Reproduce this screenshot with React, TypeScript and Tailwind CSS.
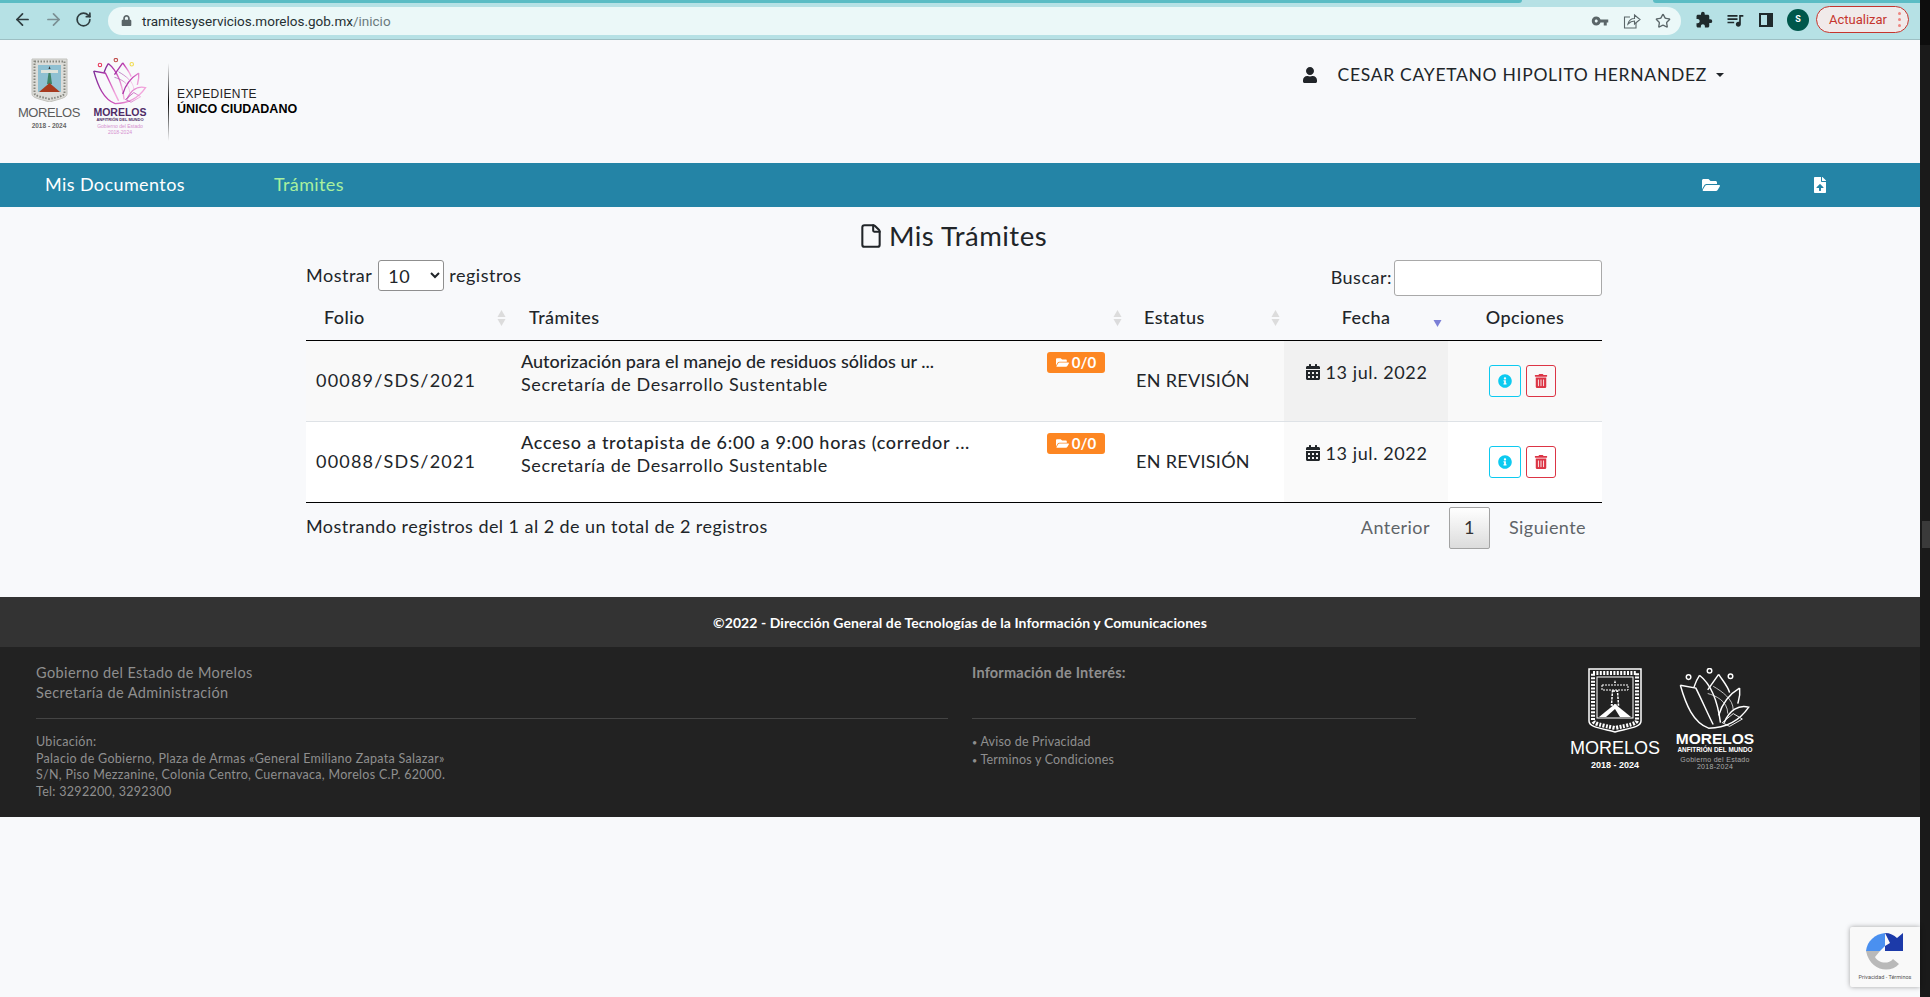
import { ArrowLeft, ArrowRight, File, RotateCw, Star } from 'lucide-react';
import { FaCalendarAlt, FaFileUpload, FaFolderOpen, FaInfoCircle, FaLock, FaTrashAlt, FaUser } from 'react-icons/fa';
import { MdExtension, MdQueueMusic, MdVpnKey } from 'react-icons/md';

const PAGE_FONT = "font-['Lato','Noto_Sans',sans-serif]";

const ROWS = [
    { folio: '00089/SDS/2021', title: 'Autorización para el manejo de residuos sólidos ur ...', titleClass: 'tracking-[0px]', striped: true },
    { folio: '00088/SDS/2021', title: 'Acceso a trotapista de 6:00 a 9:00 horas (corredor ...', titleClass: 'tracking-[0.7px]', striped: false },
];

function SortArrows({ active = false }: { active?: boolean }) {
    if (active) {
        return (
            <svg width="9" height="14" viewBox="0 0 9 14" className="absolute right-[6px] top-[18px]">
                <path d="M0.5 6 H8.5 L4.5 13 Z" fill="#7b7fd6" />
            </svg>
        );
    }
    return (
        <svg width="9" height="16" viewBox="0 0 9 16" className="absolute right-[4px] top-[14px]">
            <path d="M4.5 0 L8.5 7 H0.5 Z" fill="#dcdcdc" />
            <path d="M0.5 9 H8.5 L4.5 16 Z" fill="#dcdcdc" />
        </svg>
    );
}

function Shield({ mono = false }: { mono?: boolean }) {
    if (mono) {
        return (
            <svg viewBox="0 0 54 65" className="w-[54px] h-[65px]">
                <path d="M1 1 H53 V53 C53 59 43 60 27 64 C11 60 1 59 1 53 Z" fill="#222" stroke="#fff" strokeWidth="1.5" />
                <path d="M5 5 H49 V52 C49 56 41 57 27 60 C13 57 5 56 5 52 Z" fill="none" stroke="#fff" strokeWidth="4" strokeDasharray="2 1.4" />
                <rect x="9" y="9" width="36" height="41" fill="#222" stroke="#fff" strokeWidth="1" />
                <path d="M27 12 L28 15 L26 15 Z" fill="#fff" />
                <path d="M14 17 H40 V22 H14 Z" fill="none" stroke="#fff" strokeWidth="1" strokeDasharray="2 1" />
                <path d="M24.5 23 H29.5 L30.5 37 H23.5 Z" fill="none" stroke="#fff" strokeWidth="1.5" strokeDasharray="2.5 1" />
                <path d="M11 49 L27 36 L43 49 Z" fill="#fff" />
                <path d="M18 49 L27 41 L32 49 Z" fill="#222" />
            </svg>
        );
    }
    return (
        <svg viewBox="0 0 37 44" className="w-[37px] h-[44px]">
            <path d="M1 1 H36 V36 C36 40 28 41 18.5 44 C9 41 1 40 1 36 Z" fill="#dcdcd8" stroke="#c2c2bd" strokeWidth="1" />
            <path d="M3.5 3.5 H33.5 V35 C33.5 38 27 39 18.5 41 C10 39 3.5 38 3.5 35 Z" fill="none" stroke="#85867f" strokeWidth="2" strokeDasharray="1.5 1.5" />
            <rect x="7" y="7" width="23" height="27" fill="#8fc0d2" />
            <rect x="10" y="12" width="17" height="3" fill="#dfe3dc" />
            <path d="M18.5 8 L19.5 11 H17.5 Z" fill="#333" />
            <path d="M17.5 15 H19.5 L21 26 H16 Z" fill="#3f8266" />
            <path d="M8 34 L18.5 25 L29 34 Z" fill="#a63a1e" />
        </svg>
    );
}

function Flower({ mono = false }: { mono?: boolean }) {
    const id = mono ? 'flowerWhite' : 'flowerPink';
    return (
        <svg viewBox="0 0 76 68" className={mono ? 'w-[76px] h-[62px]' : 'w-[54px] h-[47px]'} fill="none">
            <defs>
                <linearGradient id={id} x1="0" y1="0" x2="1" y2="0.4">
                    <stop offset="0" stopColor={mono ? '#fff' : '#7a2c96'} />
                    <stop offset="0.55" stopColor={mono ? '#fff' : '#c23db0'} />
                    <stop offset="1" stopColor={mono ? '#fff' : '#f2a6dc'} />
                </linearGradient>
            </defs>
            <g stroke={`url(#${id})`} strokeWidth={mono ? 1.6 : 2}>
                <path d="M0 19 C6 40 14 60 31 66 C44 66 62 62 75 43 C64 40 54 46 48 60" />
                <path d="M0 19 L17 22 C24 36 30 50 36 62" />
                <path d="M21 8 C30 15 40 30 44 60 M21 8 C17 14 16 18 15 21" />
                <path d="M42 7 L30 24 M42 7 C48 16 52 20 54 27" />
                <path d="M65 22 C60 25 48 32 42 52 M65 22 C66 30 64 35 63 39" />
                <path d="M30 28 C38 30 52 36 52 50" strokeWidth="0.8" />
                <path d="M36 20 C46 26 58 34 58 46" strokeWidth="0.8" />
                <path d="M54 64 L68 56 L58 50 L46 60 Z" strokeWidth="1" />
            </g>
            <circle cx="9" cy="10" r="2.5" stroke={mono ? '#fff' : '#e83a5b'} strokeWidth="1.6" />
            <circle cx="32" cy="3" r="2.5" stroke={mono ? '#fff' : '#c0504d'} strokeWidth="1.6" />
            <circle cx="55" cy="9" r="2.5" stroke={mono ? '#fff' : '#f0dc4e'} strokeWidth="1.6" />
        </svg>
    );
}

function BrowserBar() {
    return (
        <div className="relative h-[40px] shrink-0 bg-[#b6e1e5] border-b border-[#9dbfc3] font-['Roboto',sans-serif] flex items-center">
            <div className="absolute top-0 left-0 w-[1522px] h-[3px] bg-[#5bbcc4] rounded-br-md" />
            <div className="absolute top-0 left-[1653px] w-[267px] h-[3px] bg-[#5bbcc4] rounded-bl-md" />
            <div className="flex items-center gap-[12px] pl-[13px] w-[108px]">
                <ArrowLeft size={19} strokeWidth={2.2} className="text-[#2f3d40]" />
                <ArrowRight size={19} strokeWidth={2.2} className="text-[#7b9094]" />
                <RotateCw size={17} strokeWidth={2.4} className="text-[#2f3d40]" />
            </div>
            <div className="w-[1573px] h-[28px] rounded-full bg-[#ebf8f8] flex items-center pl-[13px] pr-[10px] mt-[2px]">
                <FaLock size={11} className="text-[#5a6568]" />
                <span className="ml-[10px] text-[13.5px] leading-[20px] mt-[1px] text-[#263033]">
                    tramitesyservicios.morelos.gob.mx<span className="text-[#6b7b7e]">/inicio</span>
                </span>
                <div className="ml-auto flex items-center gap-[14px] text-[#5b6669]">
                    <MdVpnKey size={18} />
                    <svg width="18" height="16" viewBox="0 0 18 16" fill="none" stroke="currentColor" strokeWidth="1.1">
                        <path d="M7 4 H1.5 V15 H13 V10" />
                        <path d="M5 11 C6 7 9 5.5 11.5 5.5 V2 L17 6.5 L11.5 11 V8 C9 8 7 9 5 11 Z" />
                    </svg>
                    <Star size={16} strokeWidth={2} />
                </div>
            </div>
            <div className="flex items-center gap-[12px] ml-[14px] text-[#1f2a2c]">
                <MdExtension size={18} />
                <MdQueueMusic size={20} />
                <div className="w-[14px] h-[14px] border-[2.5px] border-r-[6px] border-[#1f2a2c] ml-[2px]" />
            </div>
            <div className="ml-[14px] w-[22px] h-[22px] rounded-full bg-[#00574b] text-white text-[9px] font-bold flex items-center justify-center">S</div>
            <div className="ml-[7px] w-[93px] h-[27px] rounded-full border border-[#c5352d] bg-[#f1eaea] text-[#c5352d] text-[13px] flex items-center pl-[12px] gap-[11px]">
                Actualizar
                <span className="flex flex-col gap-[3px]">
                    <i className="block w-[3px] h-[3px] rounded-full bg-[#ee8580]" />
                    <i className="block w-[3px] h-[3px] rounded-full bg-[#ee8580]" />
                    <i className="block w-[3px] h-[3px] rounded-full bg-[#ee8580]" />
                </span>
            </div>
        </div>
    );
}

function SiteHeader() {
    return (
        <header className="h-[123px] shrink-0 flex items-start justify-between">
            <div className="flex items-start pl-[18px] pt-[18px]">
                <div className="w-[62px] flex flex-col items-center">
                    <Shield />
                    <span className="text-[13px] tracking-[-0.4px] leading-[16px] mt-[3px] font-['Liberation_Sans',sans-serif] text-[#5c5c5c]">MORELOS</span>
                    <span className="text-[6.5px] leading-[9px] font-bold text-[#666] font-['Liberation_Sans',sans-serif]">2018 - 2024</span>
                </div>
                <div className="w-[56px] ml-[12px] flex flex-col items-center font-['Liberation_Sans',sans-serif]">
                    <Flower />
                    <span className="text-[10.5px] leading-[10px] mt-[2px] font-bold text-[#4f2b66]">MORELOS</span>
                    <span className="text-[4px] leading-[5px] font-bold text-[#4f2b66]">ANFITRIÓN DEL MUNDO</span>
                    <span className="text-[5px] leading-[6px] mt-[1px] text-[#d58fcf]">Gobierno del Estado</span>
                    <span className="text-[5px] leading-[6px] text-[#d58fcf]">2018-2024</span>
                </div>
                <div className="w-[1px] h-[78px] ml-[20px] mt-[5px] bg-gradient-to-b from-transparent via-black to-transparent" />
                <div className="ml-[8px] mt-[29px] text-[12px] leading-[15px] text-[#222] font-['Liberation_Sans',sans-serif]">
                    <div className="tracking-[0.4px]">EXPEDIENTE</div>
                    <div className="font-bold text-black text-[12.5px]">ÚNICO CIUDADANO</div>
                </div>
            </div>
            <div className="flex items-center pt-[24px] pr-[196px] text-[#212529]">
                <FaUser size={16} />
                <span className="ml-[20px] text-[17.5px] tracking-[0.7px] leading-[22px]">CESAR CAYETANO HIPOLITO HERNANDEZ</span>
                <span className="ml-[9px] border-x-[4.5px] border-x-transparent border-t-[4.5px] border-t-[#212529]" />
            </div>
        </header>
    );
}

function NavBar() {
    return (
        <nav className="h-[44px] shrink-0 bg-[#2484a6] flex items-center pl-[45px] pb-[1px] text-[18px] tracking-[0.4px] text-white">
            <span>Mis Documentos</span>
            <span className="ml-[89px] text-[#a9f09e]">Trámites</span>
            <FaFolderOpen size={18} className="ml-auto" />
            <FaFileUpload size={16} className="ml-[92px] mr-[92px]" />
        </nav>
    );
}

function TramitesTable() {
    return (
        <table className="w-full table-fixed border-collapse text-[18px] tracking-[0.5px] text-[#212529]">
            <colgroup>
                <col className="w-[204px]" />
                <col className="w-[616px]" />
                <col className="w-[158px]" />
                <col className="w-[164px]" />
                <col className="w-[154px]" />
            </colgroup>
            <thead>
                <tr className="h-[44px] border-b border-black text-left tracking-[0.4px]">
                    <th className="relative pl-[18px] font-medium">Folio<SortArrows /></th>
                    <th className="relative pl-[19px] font-medium">Trámites<SortArrows /></th>
                    <th className="relative pl-[18px] font-medium">Estatus<SortArrows /></th>
                    <th className="relative text-center font-medium">Fecha<SortArrows active /></th>
                    <th className="text-center font-medium">Opciones</th>
                </tr>
            </thead>
            <tbody>
                {ROWS.map((row) => (
                    <tr key={row.folio} className={`h-[81px] ${row.striped ? 'bg-[#f9f9f9] border-b border-[#dee2e6]' : 'bg-white border-b border-black'}`}>
                        <td className="pl-[10px] tracking-[1.2px]">{row.folio}</td>
                        <td className="pl-[11px] pr-[21px] align-top">
                            <div className="flex justify-between pt-[11px] h-[34px]">
                                <span className={`font-medium -mt-[4px] whitespace-nowrap ${row.titleClass}`}>{row.title}</span>
                                <span className="h-[21px] w-[58px] rounded-[3px] bg-[#fd8622] text-white text-[15px] tracking-normal font-bold flex items-center justify-center gap-[3px]">
                                    <FaFolderOpen size={13} />0/0
                                </span>
                            </div>
                            <div className="leading-[24px] -mt-[3px] tracking-[0.58px]">Secretaría de Desarrollo Sustentable</div>
                        </td>
                        <td className="pl-[10px] tracking-[0.3px]">EN REVISIÓN</td>
                        <td className={`align-top pt-[19px] tracking-[0.6px] ${row.striped ? 'bg-[#f1f1f1]' : 'bg-[#fafafa]'}`}>
                            <div className="flex items-center justify-center gap-[5px]">
                                <FaCalendarAlt size={16} />
                                <span className="leading-[24px]">13 jul. 2022</span>
                            </div>
                        </td>
                        <td>
                            <div className="flex justify-center gap-[5px] mt-[1px] pr-[5px]">
                                <button className="w-[32px] h-[32px] border border-[#0dcaf0] rounded-[3px] flex items-center justify-center text-[#0dcaf0]">
                                    <FaInfoCircle size={14} />
                                </button>
                                <button className="w-[30px] h-[32px] border border-[#dc3545] rounded-[3px] flex items-center justify-center text-[#dc3545]">
                                    <FaTrashAlt size={14} />
                                </button>
                            </div>
                        </td>
                    </tr>
                ))}
            </tbody>
        </table>
    );
}

function MainContent() {
    return (
        <main className="h-[390px] shrink-0 pl-[306px] pr-[318px]">
            <h1 className="flex items-center justify-center h-[32px] mt-[13px] pr-[3px] text-[27.5px] tracking-[0.5px] text-[#212529]">
                <File size={26} strokeWidth={1.9} className="mr-[5px]" />
                Mis Trámites
            </h1>
            <div className="flex justify-between h-[36px] mt-[8px] text-[18px] tracking-[0.5px] text-[#212529]">
                <label className="flex items-start leading-[30px]">
                    Mostrar
                    <select defaultValue="10" className="ml-[6px] mr-[5px] w-[66px] h-[31px] rounded-[3px] border border-[#8f8f8f] bg-white pl-[5px] text-[18px]">
                        <option>10</option>
                    </select>
                    registros
                </label>
                <label className="flex items-start leading-[34px]">
                    Buscar:
                    <input className="ml-[2px] w-[208px] h-[36px] rounded-[3px] border border-[#a9a9a9] bg-white" />
                </label>
            </div>
            <TramitesTable />
            <div className="flex justify-between text-[18px] tracking-[0.44px] text-[#212529]">
                <span className="mt-[10px]">Mostrando registros del 1 al 2 de un total de 2 registros</span>
                <div className="flex items-center mt-[4px] text-[#5f6468]">
                    <span>Anterior</span>
                    <span className="ml-[19px] w-[41px] h-[42px] flex items-center justify-center border border-[#a3a3a3] rounded-[2px] text-[#333] bg-gradient-to-b from-white to-[#dcdcdc]">1</span>
                    <span className="ml-[19px] mr-[16px]">Siguiente</span>
                </div>
            </div>
        </main>
    );
}

function SiteFooter() {
    return (
        <footer className="shrink-0">
            <div className="h-[50px] bg-[#333] flex items-center justify-center text-[14px] tracking-[0.07px] font-bold text-white">
                ©2022 - Dirección General de Tecnologías de la Información y Comunicaciones
            </div>
            <div className="h-[170px] bg-[#222] flex pl-[36px] text-[#8f8f8f]">
                <div className="w-[912px]">
                    <div className="h-[72px] border-b border-[#444] pt-[16px] text-[14.5px] tracking-[0.4px] leading-[20px]">
                        <div>Gobierno del Estado de Morelos</div>
                        <div>Secretaría de Administración</div>
                    </div>
                    <div className="mt-[15px] text-[12.5px] tracking-[0.3px] leading-[16.5px]">
                        <div>Ubicación:</div>
                        <div>Palacio de Gobierno, Plaza de Armas «General Emiliano Zapata Salazar»</div>
                        <div>S/N, Piso Mezzanine, Colonia Centro, Cuernavaca, Morelos C.P. 62000.</div>
                        <div>Tel: 3292200, 3292300</div>
                    </div>
                </div>
                <div className="ml-[24px] w-[444px]">
                    <div className="h-[72px] border-b border-[#444] pt-[16px] text-[14.5px] tracking-[0.2px] leading-[20px] font-bold">
                        Información de Interés:
                    </div>
                    <div className="mt-[15px] text-[12.5px] tracking-[0.2px] leading-[16.5px]">
                        <div><span className="text-[9px]">•</span> Aviso de Privacidad</div>
                        <div><span className="text-[9px]">•</span> Terminos y Condiciones</div>
                    </div>
                </div>
                <div className="ml-[155px] mt-[21px] flex items-start font-['Liberation_Sans',sans-serif]">
                    <div className="w-[88px] flex flex-col items-center text-white">
                        <Shield mono />
                        <span className="text-[18px] leading-[24px] mt-[3px]">MORELOS</span>
                        <span className="text-[9px] leading-[11px] font-bold">2018 - 2024</span>
                    </div>
                    <div className="w-[78px] ml-[17px] flex flex-col items-center text-white">
                        <Flower mono />
                        <span className="text-[15.5px] leading-[14px] mt-[2px] font-bold">MORELOS</span>
                        <span className="text-[6.4px] leading-[7px] font-bold">ANFITRIÓN DEL MUNDO</span>
                        <span className="text-[7px] tracking-[0.3px] leading-[7px] mt-[3px] text-[#aaa]">Gobierno del Estado</span>
                        <span className="text-[7px] tracking-[0.3px] leading-[7px] text-[#aaa]">2018-2024</span>
                    </div>
                </div>
            </div>
        </footer>
    );
}

function RecaptchaBadge() {
    return (
        <div className="absolute left-[1850px] top-[927px] w-[70px] h-[60px] bg-[#f9f9f9] rounded-l-[2px] shadow-[0_0_5px_rgba(0,0,0,0.35)] flex flex-col items-center">
            <svg viewBox="0 0 38 38" className="w-[38px] h-[38px] mt-[6px]">
                <path d="M19 0 V13 L14 18 H0 C1 8 9 1 19 0 Z" fill="#4a90f0" />
                <path d="M19 0 C24 0 28 2 31 5 L37 0 V18 H19 V13 L24 10 Z" fill="#1c3aa9" />
                <path d="M0 18 H14 L9 24 C12 30 22 32 27 26 L33 31 C24 41 4 38 0 18 Z" fill="#b9b9b9" />
            </svg>
            <span className="text-[5.5px] leading-[8px] mt-[2px] text-[#555] font-['Roboto',sans-serif] whitespace-nowrap">Privacidad - Términos</span>
        </div>
    );
}

function ScrollTrack() {
    return (
        <div className="w-[10px] flex flex-col items-end bg-[#1a1a1a]">
            <div className="w-full h-[45px] bg-[#0d0d0d]" />
            <div className="w-[8px] h-[27px] mt-[476px] bg-[#3a3a3a]" />
        </div>
    );
}

export default function App() {
    return (
        <div className={`relative w-[1930px] h-[997px] overflow-hidden flex bg-[#f8f9fb] ${PAGE_FONT}`}>
            <div className="w-[1920px] flex flex-col">
                <BrowserBar />
                <SiteHeader />
                <NavBar />
                <MainContent />
                <SiteFooter />
            </div>
            <ScrollTrack />
            <RecaptchaBadge />
        </div>
    );
}
